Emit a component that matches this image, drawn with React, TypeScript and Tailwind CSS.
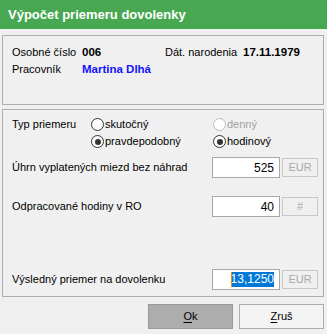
import React from "react";

const font = { fontFamily: '"Liberation Sans", Arial, sans-serif' };

function Radio({ label, checked, disabled }: { label: string; checked?: boolean; disabled?: boolean }) {
  return (
    <div className="flex items-center h-[17px] whitespace-nowrap">
      <span
        className={
          "w-[13px] h-[13px] rounded-full border bg-white flex items-center justify-center " +
          (disabled ? "border-[#bcbcbc]" : "border-[#333333]")
        }
      >
        {checked && <span className="w-[6px] h-[6px] rounded-full bg-[#333333]" />}
      </span>
      <span className={"ml-[1px] " + (disabled ? "text-[#a0a0a0]" : "text-black")}>{label}</span>
    </div>
  );
}

function Field({
  label,
  value,
  unit,
  selected,
  className,
}: {
  label: string;
  value: string;
  unit: string;
  selected?: boolean;
  className?: string;
}) {
  return (
    <div className={"flex items-center h-[21px] " + (className ?? "")}>
      <div className="w-[209px] pl-[9px] whitespace-nowrap">{label}</div>
      <div className="w-[68px] h-[21px] border border-[#a8a8a8] bg-white flex items-center justify-end pr-[5px] text-[12px]">
        {selected ? (
          <span className="relative bg-[#0078d7] text-white leading-[15px] h-[15px] flex items-center">
            <span className="absolute left-0 top-0 w-[1px] h-[15px] bg-[#ff8000]" />
            {value}
          </span>
        ) : (
          <span>{value}</span>
        )}
      </div>
      <div className="ml-[2px] w-[36px] h-[19px] border border-[#c8c8c8] flex items-center justify-center text-[#a8a8a8]">
        {unit}
      </div>
    </div>
  );
}

export default function App() {
  return (
    <div className="w-[327px] h-[334px] bg-[#f0f0f0] text-[11px] text-black overflow-hidden" style={font}>
      <div className="h-[29px] bg-[#47a851] flex items-center pl-[8px] text-white font-bold text-[13px] whitespace-nowrap">
        Výpočet priemeru dovolenky
      </div>
      <div className="mt-[6px] ml-[2px] w-[322px] h-[70px] border border-[#adadad] pt-[8px] whitespace-nowrap text-[11.5px]">
        <div className="flex items-center h-[17px]">
          <div className="w-[79px] pl-[9px] text-[11px]">Osobné číslo</div>
          <div className="w-[83px] font-bold">006</div>
          <div className="w-[78px] text-[11px]">Dát. narodenia</div>
          <div className="font-bold">17.11.1979</div>
        </div>
        <div className="flex items-center h-[17px]">
          <div className="w-[79px] pl-[9px] text-[11px]">Pracovník</div>
          <div className="font-bold text-[#1414ff]">Martina Dlhá</div>
        </div>
      </div>
      <div className="mt-[4px] ml-[2px] w-[322px] h-[188px] border border-[#adadad] pt-[6px]">
        <div className="flex">
          <div className="w-[88px] pl-[9px] h-[17px] flex items-center whitespace-nowrap">Typ priemeru</div>
          <div className="w-[122px] flex flex-col">
            <Radio label="skutočný" />
            <Radio label="pravdepodobný" checked />
          </div>
          <div className="flex flex-col">
            <Radio label="denný" disabled />
            <Radio label="hodinový" checked />
          </div>
        </div>
        <Field className="mt-[7px]" label="Úhrn vyplatených miezd bez náhrad" value="525" unit="EUR" />
        <Field className="mt-[18px]" label="Odpracované hodiny v RO" value="40" unit="#" />
        <Field className="mt-[52px]" label="Výsledný priemer na dovolenku" value="13,1250" unit="EUR" selected />
      </div>
      <div className="mt-[7px] flex justify-end pr-[3px] gap-[6px]">
        <div className="w-[85px] h-[25px] bg-[#adadad] border border-[#999999] flex items-center justify-center">
          <span className="underline underline-offset-2">O</span>k
        </div>
        <div className="w-[85px] h-[25px] bg-[#f3f3f3] border border-[#adadad] flex items-center justify-center">
          <span className="underline underline-offset-2">Z</span>ruš
        </div>
      </div>
    </div>
  );
}
